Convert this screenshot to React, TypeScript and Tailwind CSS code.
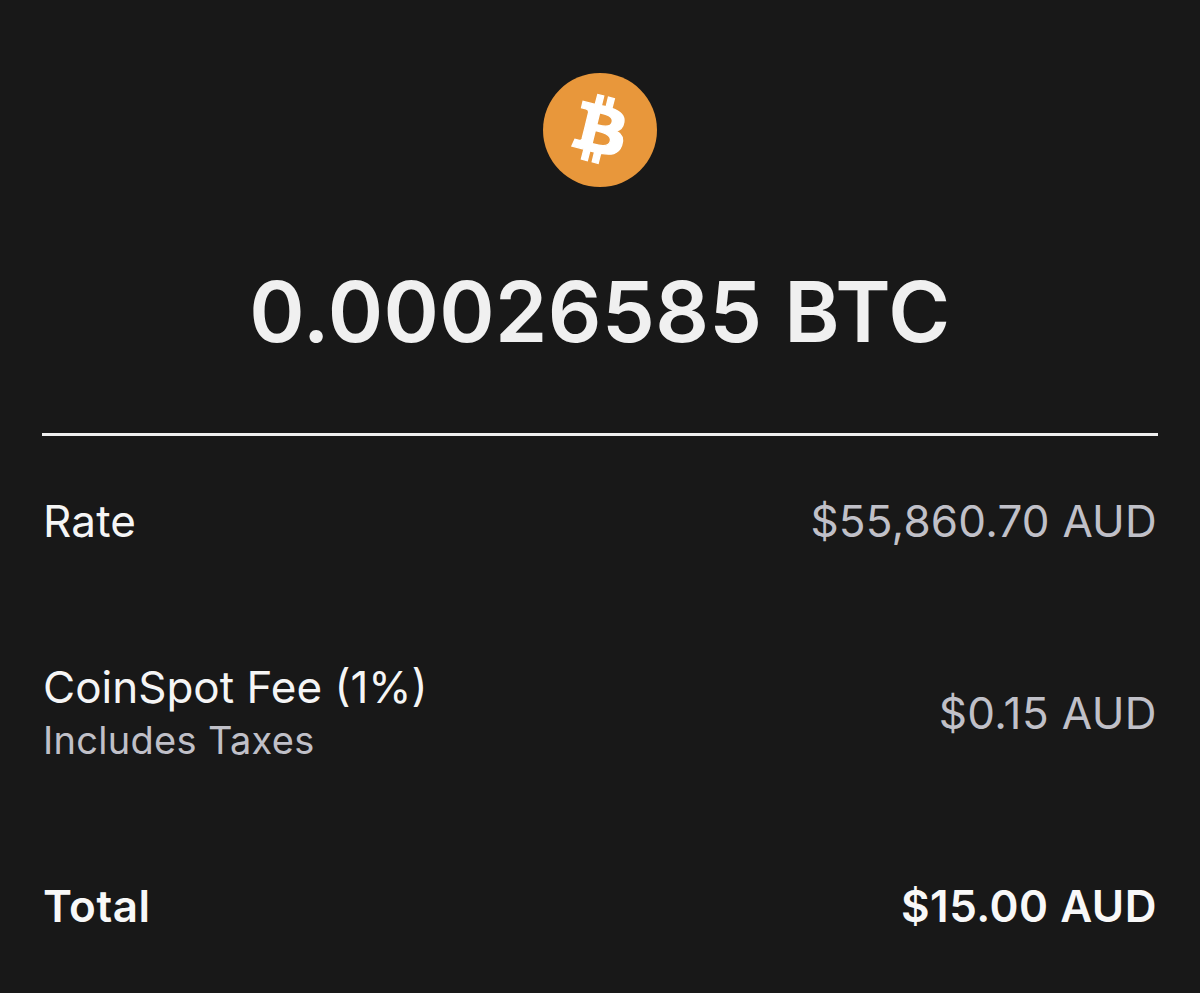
export default function App() {
  return (
    <div className="w-[1200px] h-[993px] overflow-hidden bg-[#181818] font-['Inter','Liberation_Sans',sans-serif] flex flex-col">
      <div className="flex justify-center pt-[73px]">
        <svg width="114" height="114" viewBox="0 0 64 64">
          <circle cx="32" cy="32" r="32" fill="#E8973B" />
          <path
            fill="#fff"
            stroke="#fff"
            strokeWidth="0.8"
            transform="translate(32 32) scale(0.95) translate(-32 -32)"
            d="M46.1 27.4c.6-4.3-2.6-6.6-7.1-8.1l1.5-5.8-3.5-.9-1.4 5.7c-.9-.2-1.9-.5-2.8-.7l1.4-5.7-3.5-.9-1.5 5.8c-.8-.2-1.5-.3-2.3-.5l-4.9-1.2-.9 3.8s2.6.6 2.6.6c1.4.4 1.7 1.3 1.6 2l-1.6 6.6c.1 0 .2.1.4.1-.1 0-.2-.1-.4-.1l-2.3 9.2c-.2.4-.6 1.1-1.6.8 0 0-2.6-.6-2.6-.6l-1.8 4 4.6 1.2c.9.2 1.7.4 2.5.6l-1.5 5.9 3.5.9 1.5-5.8c1 .3 1.9.5 2.8.7l-1.4 5.8 3.5.9 1.5-5.9c6 1.1 10.5.7 12.4-4.7 1.5-4.4-.1-6.9-3.2-8.5 2.3-.5 4-2 4.5-5.2zm-8 11.2c-1.1 4.4-8.4 2-10.8 1.4l1.9-7.7c2.4.6 10 1.8 8.9 6.3zm1.1-11.3c-1 4-7.1 2-9.1 1.5l1.7-7c2 .5 8.4 1.4 7.4 5.5z"
          />
        </svg>
      </div>

      <h1 className="text-center text-[84px] leading-none font-semibold tracking-[0.4px] text-[#f0f0f0] mt-[83px]">
        0.00026585 BTC
      </h1>

      <div className="mx-[42px] mt-[79px] border-t-[3px] border-[#eeeeee]" />

      <div className="mx-[43px] flex flex-col">
        <div className="flex justify-between items-center mt-[61px] h-[48px] text-[44px] tracking-[0.2px]">
          <span className="text-[#f5f5f5]">Rate</span>
          <span className="text-[#c0c0c8]">$55,860.70 AUD</span>
        </div>

        <div className="flex justify-between items-center mt-[115px] h-[106px]">
          <div className="flex flex-col pt-[2px]">
            <span className="text-[44px] leading-[53px] text-[#f5f5f5]">CoinSpot Fee (1%)</span>
            <span className="text-[38px] leading-[53px] tracking-[0.3px] text-[#c0c0c8]">Includes Taxes</span>
          </div>
          <span className="text-[44px] tracking-[0.4px] text-[#c0c0c8]">$0.15 AUD</span>
        </div>

        <div className="flex justify-between items-center mt-[116px] h-[48px] text-[44px] tracking-[0.5px] font-semibold text-[#f8f8f8]">
          <span>Total</span>
          <span>$15.00 AUD</span>
        </div>
      </div>
    </div>
  );
}
